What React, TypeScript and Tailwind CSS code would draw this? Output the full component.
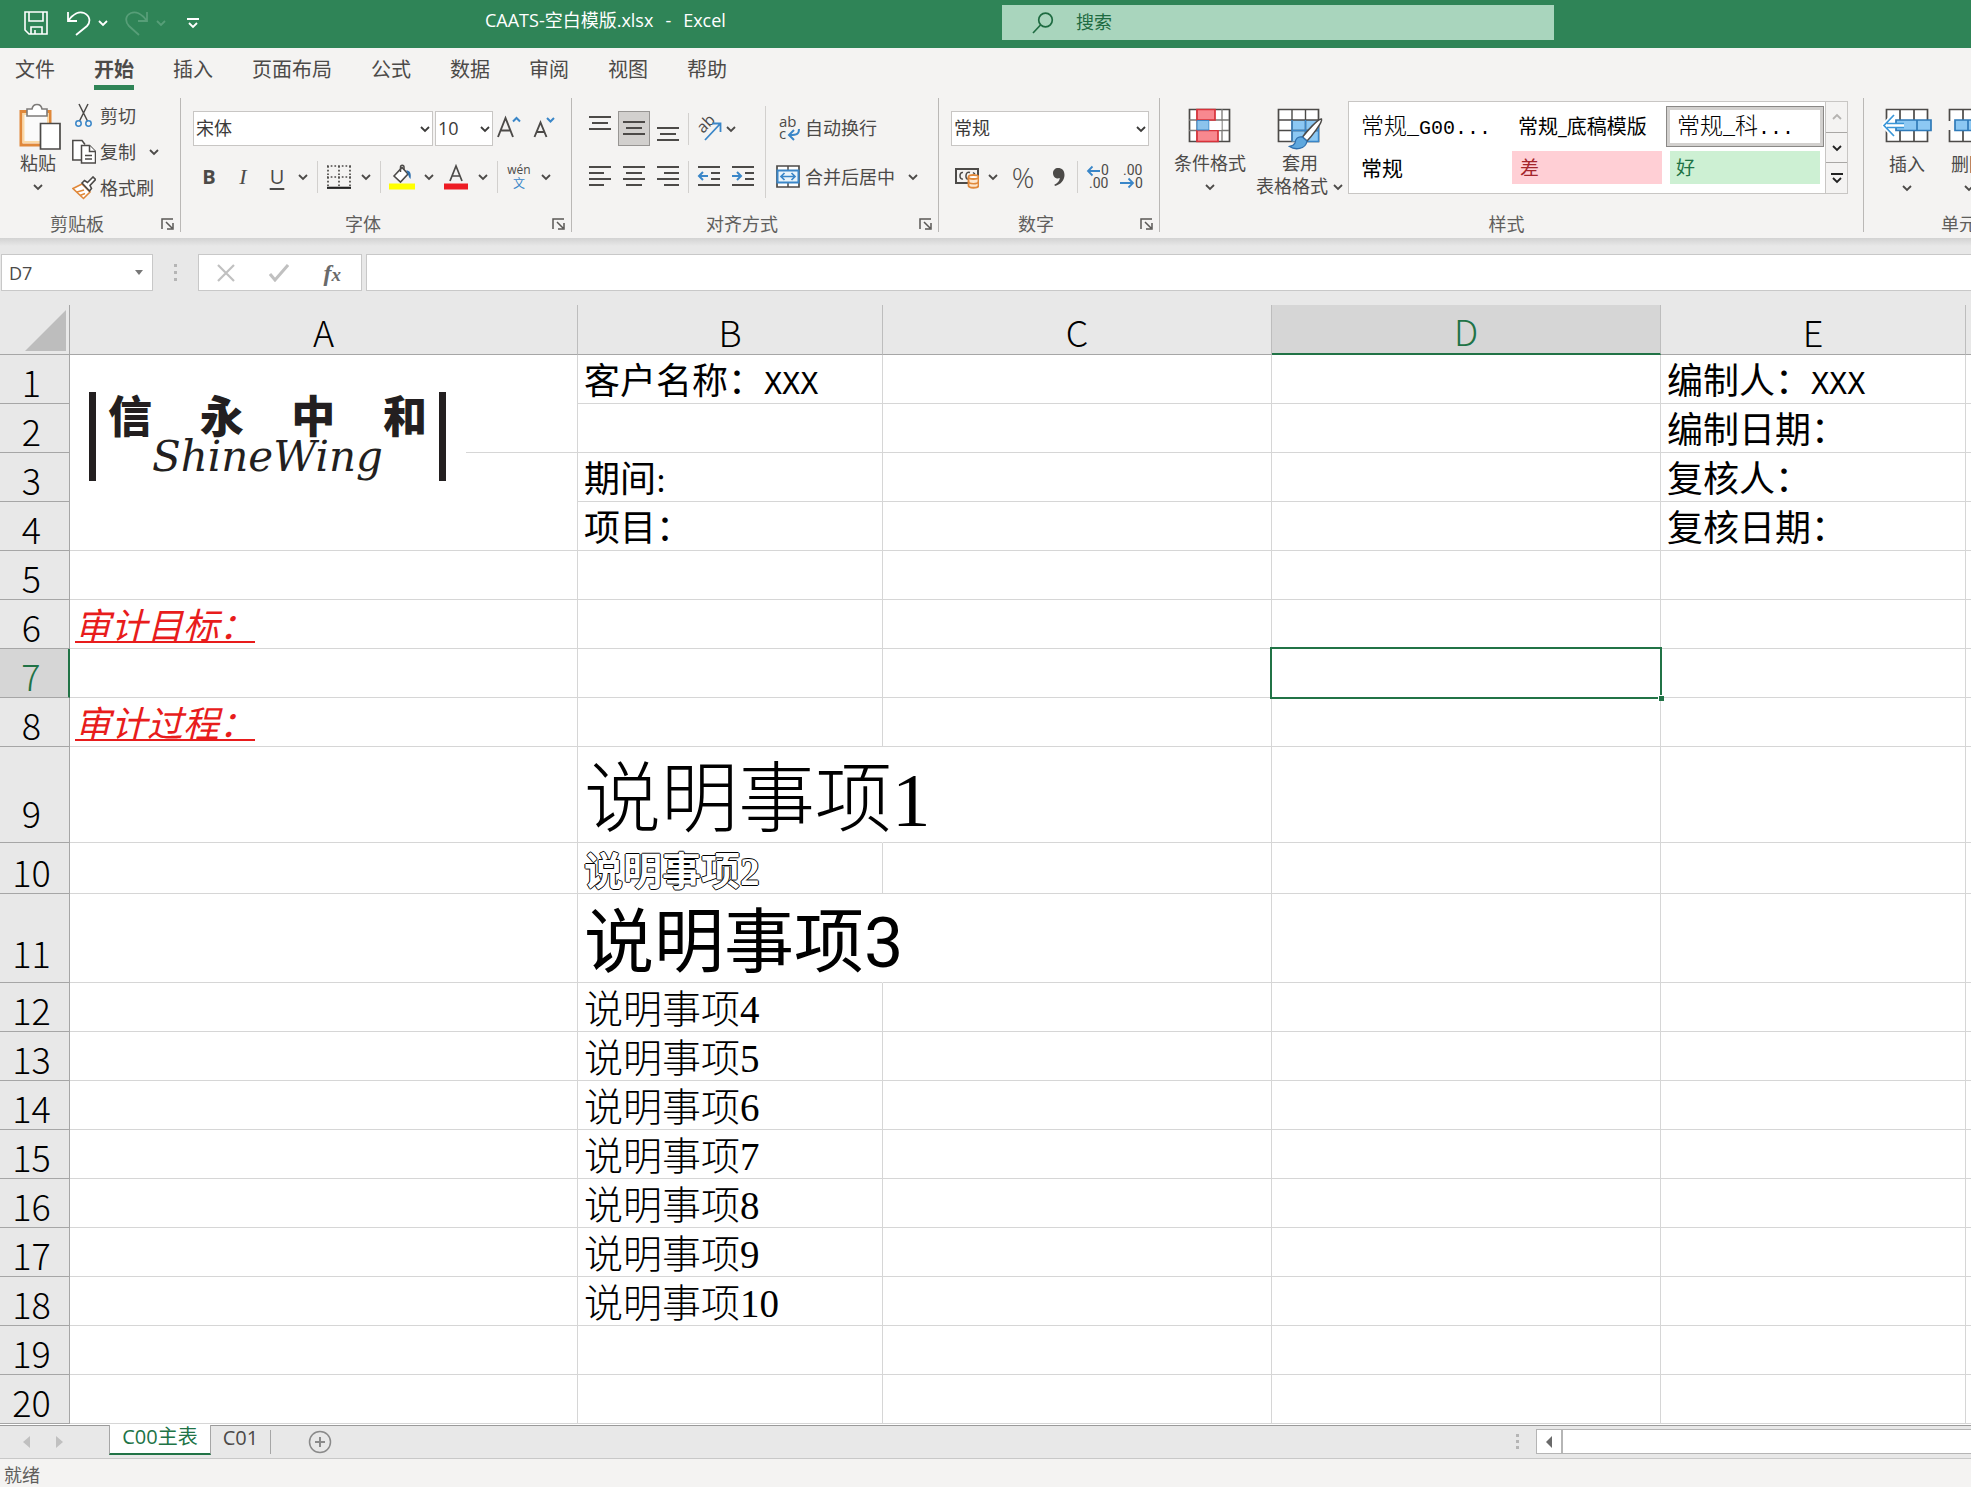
import React from "react";

const UI = "font-['Open_Sans','Noto_Sans_CJK_SC',sans-serif]";
const SONG = "font-['Liberation_Serif','Noto_Sans_CJK_SC',serif]";

function Chevron({ className = "" }: { className?: string }) {
  return (
    <svg className={`h-3 w-3 shrink-0 ${className}`} viewBox="0 0 12 12" fill="none" stroke="currentColor" strokeWidth="1.8">
      <path d="M2 4l4 4 4-4" />
    </svg>
  );
}

function Sep({ className = "" }: { className?: string }) {
  return <div className={`w-px shrink-0 bg-[#d2d0ce] ${className}`} />;
}

function IconButton({ label, className = "", children }: { label: string; className?: string; children: React.ReactNode }) {
  return (
    <button type="button" aria-label={label} className={`flex shrink-0 items-center justify-center ${className}`}>
      {children}
    </button>
  );
}

function Group({ label, launcher = true, className = "", children }: { label: string; launcher?: boolean; className?: string; children: React.ReactNode }) {
  return (
    <section className={`flex h-[134px] shrink-0 flex-col border-r border-[#bab8b6] ${className}`} aria-label={label}>
      <div className="h-[118px]">{children}</div>
      <div className="flex h-4 items-center pr-1">
        <span className="flex-1 pr-1.5 text-center text-[18px] leading-4 text-[#605e5c]">{label}</span>
        {launcher && (
          <IconButton label={`${label}设置`} className="h-4 w-4">
            <svg width="14" height="14" viewBox="0 0 14 14" fill="none" stroke="#5a5856" strokeWidth="1.5">
              <path d="M1 12V2h11M5 5l6 6M12 6v6H6" />
            </svg>
          </IconButton>
        )}
      </div>
    </section>
  );
}

function SelectBox({ label, value, className = "" }: { label: string; value: string; className?: string }) {
  return (
    <label className={`relative block h-[35px] shrink-0 ${className}`}>
      <select aria-label={label} defaultValue={value} className="h-full w-full appearance-none border border-[#c8c6c4] bg-white pl-0.5 text-[18px] text-[#3b3a39] outline-none">
        <option>{value}</option>
      </select>
      <Chevron className="pointer-events-none absolute right-0.5 top-3 text-[#3b3a39]" />
    </label>
  );
}

function Lines({ rows, top }: { rows: [number, number][]; top: number }) {
  return (
    <svg width="24" height="28" viewBox="0 0 24 28" stroke="#4c4a48" strokeWidth="2">
      {rows.map(([a, b], i) => (
        <path key={i} d={`M${a} ${top + i * 6}H${b}`} />
      ))}
    </svg>
  );
}

function Clipboard() {
  return (
    <Group label="剪贴板" className="w-[181px]">
      <div className="flex pl-3">
        <button type="button" className="flex w-[52px] flex-col items-center pt-[3px] text-[18px] leading-6 text-[#4c4a48]">
          <svg width="46" height="50" viewBox="0 0 46 50" fill="none">
            <path d="M6 10.500H35V44H6z" fill="#fff" stroke="#e0883a" strokeWidth="3" />
            <path d="M8.500 13H33v28H8.500z" fill="#fafafa" stroke="#fbd9a6" strokeWidth="2" />
            <path d="M12 8h5c1-6 9-6 10 0h5v7H12z" fill="#fff" stroke="#7d7b79" strokeWidth="1.600" />
            <path d="M25.500 22.500H45V48H25.500z" fill="#fff" stroke="#4c4a48" strokeWidth="1.700" />
          </svg>
          <span>粘贴</span>
          <Chevron className="mt-1.5" />
        </button>
        <div className="flex flex-col pl-2 text-[18px] text-[#4c4a48]">
          <button type="button" className="flex h-9 items-center gap-1">
            <svg width="24" height="26" viewBox="0 0 24 26" fill="none" strokeWidth="1.500">
              <path d="M7 1l8.500 17M16 1L7.500 18" stroke="#4c4a48" />
              <circle cx="6.500" cy="20.500" r="2.700" stroke="#3a86c8" />
              <circle cx="16.500" cy="20.500" r="2.700" stroke="#3a86c8" />
            </svg>
            剪切
          </button>
          <button type="button" className="flex h-9 items-center gap-1">
            <svg width="24" height="26" viewBox="0 0 24 26" fill="#fff" stroke="#4c4a48" strokeWidth="1.500">
              <path d="M9 21H.8V1.500H10l3 4" />
              <path d="M9.500 6.500h8l6 6V24h-14z" />
              <path d="M17.500 6.500v6h6M13 16.500h7M13 20h7" />
            </svg>
            复制
            <Chevron className="ml-2" />
          </button>
          <button type="button" className="flex h-9 items-center gap-1">
            <svg width="24" height="24" viewBox="0 0 24 24" fill="none" strokeWidth="1.600">
              <path d="M1 12.500l9-4.500 8 8-6.500 6.500z" fill="#fff" stroke="#e0883a" />
              <path d="M5 16l7-2M8 19.500l5-2" stroke="#e0883a" />
              <path d="M10 7l2.500-2.500 3 2L21 1l2.500 2.500-5.500 6 1.500 3-2 2.500z" fill="#fff" stroke="#4c4a48" />
            </svg>
            格式刷
          </button>
        </div>
      </div>
    </Group>
  );
}

function FontGroup() {
  return (
    <Group label="字体" className="w-[391px]">
      <div className="flex flex-col gap-[15px] pl-3 pt-[13px] text-[#4c4a48]">
        <div className="flex items-center">
          <SelectBox label="字体" value="宋体" className="w-[240px]" />
          <SelectBox label="字号" value="10" className="ml-0.5 w-[58px]" />
          <IconButton label="增大字号" className="ml-1 w-6">
            <svg width="24" height="30" viewBox="0 0 24 30" fill="none">
              <path d="M1 23L8.500 4l7.500 19M4 16.500h9" stroke="#4c4a48" strokeWidth="1.900" />
              <path d="M16 7.500l3.500-3.500L23 7.500" stroke="#3a86c8" strokeWidth="2" />
            </svg>
          </IconButton>
          <IconButton label="减小字号" className="ml-3 w-6">
            <svg width="24" height="30" viewBox="0 0 24 30" fill="none">
              <path d="M1.500 23L7.500 8.500l6 14.500M4 18h7" stroke="#4c4a48" strokeWidth="1.900" />
              <path d="M14 4l3.500 3.500L21 4" stroke="#3a86c8" strokeWidth="2" />
            </svg>
          </IconButton>
        </div>
        <div className="flex h-8 items-center pl-0.5">
          <div className="flex items-center gap-1.5 pr-2">
            <IconButton label="加粗" className="w-7 text-[20px] font-bold leading-7">B</IconButton>
            <IconButton label="倾斜" className="w-7 font-['Liberation_Serif',serif] text-[22px] italic leading-7">I</IconButton>
            <IconButton label="下划线" className="w-7 text-[20px] leading-7 underline underline-offset-4">U</IconButton>
            <Chevron />
          </div>
          <Sep className="h-8" />
          <div className="flex items-center gap-2 px-2">
            <IconButton label="边框" className="w-[26px]">
              <svg width="24" height="24" viewBox="0 0 24 24" fill="none" stroke="#4c4a48" strokeWidth="1.700">
                <path d="M0 1h24M0 12h24" strokeDasharray="1.700 2" />
                <path d="M1 1v20M12 1v20M23 1v20" strokeDasharray="1.700 2" />
                <path d="M0 22.800h24" stroke="#222" strokeWidth="2.200" />
              </svg>
            </IconButton>
            <Chevron />
          </div>
          <Sep className="h-8" />
          <div className="flex items-center gap-2 px-2">
            <IconButton label="填充颜色" className="w-[26px]">
              <svg width="26" height="26" viewBox="0 0 26 26" fill="none">
                <path d="M5 12L13 3.500l6 6.500-7.500 8z" fill="#fff" stroke="#4c4a48" strokeWidth="1.600" />
                <path d="M11.500 8V3c0-2.500 3.500-2.500 3.500 0v3" stroke="#4c4a48" strokeWidth="1.500" />
                <path d="M17 6.500c4 0 5.500 2.500 4.500 8.500-2-1.500-2-5-4.500-8.500z" fill="#2f6fad" />
                <path d="M0 19.500h26v6H0z" fill="#ffff00" />
              </svg>
            </IconButton>
            <Chevron />
            <IconButton label="字体颜色" className="w-[26px]">
              <svg width="26" height="26" viewBox="0 0 26 26" fill="none">
                <path d="M7 17L13 2l6 15M9 12h8" stroke="#4c4a48" strokeWidth="1.700" />
                <path d="M1 19.500h24v6H1z" fill="#ed1c24" />
              </svg>
            </IconButton>
            <Chevron />
          </div>
          <Sep className="h-8" />
          <div className="flex items-center gap-2 pl-2">
            <IconButton label="拼音" className="h-8 w-[26px] flex-col">
              <span className="text-[12px] leading-[14px]">wén</span>
              <span className="text-[12px] leading-[14px] text-[#3a86c8]">文</span>
            </IconButton>
            <Chevron />
          </div>
        </div>
      </div>
    </Group>
  );
}

function AlignGroup() {
  const full: [number, number] = [1, 23];
  return (
    <Group label="对齐方式" className="w-[367px]">
      <div className="flex pl-3 text-[#4c4a48]">
        <div className="flex w-[181px] flex-col gap-[15px] pt-[13px]">
          <div className="flex h-[35px] items-center gap-0.5">
            <IconButton label="顶端对齐" className="h-[35px] w-8"><Lines rows={[full, [4, 20], full]} top={2} /></IconButton>
            <IconButton label="垂直居中" className="h-[35px] w-8 border border-[#979593] bg-[#d2d0ce]"><Lines rows={[full, [4, 20], full]} top={7} /></IconButton>
            <IconButton label="底端对齐" className="h-[35px] w-8"><Lines rows={[full, [4, 20], full]} top={13} /></IconButton>
            <Sep className="ml-0.5 h-8" />
            <IconButton label="方向" className="ml-1.5 w-[26px]">
              <svg width="26" height="28" viewBox="0 0 26 28" className="overflow-visible" fill="none">
                <text transform="translate(6 19) rotate(-45)" fontSize="16" fontFamily="Open Sans" fill="#4c4a48">ab</text>
                <path d="M8 25L23 9M15 8.500h8.500v8.500" stroke="#3a86c8" strokeWidth="1.800" />
              </svg>
            </IconButton>
            <Chevron />
          </div>
          <div className="flex h-8 items-center gap-0.5">
            <IconButton label="左对齐" className="w-8"><Lines rows={[full, [1, 16], full, [1, 16]]} top={4} /></IconButton>
            <IconButton label="居中" className="w-8"><Lines rows={[full, [4, 20], full, [4, 20]]} top={4} /></IconButton>
            <IconButton label="右对齐" className="w-8"><Lines rows={[full, [8, 23], full, [8, 23]]} top={4} /></IconButton>
            <Sep className="ml-0.5 h-8" />
            <IconButton label="减少缩进" className="ml-1.5 w-6">
              <svg width="24" height="28" viewBox="0 0 24 28" fill="none" stroke="#4c4a48" strokeWidth="2">
                <path d="M1 4h22M14 10h9M14 16h9M1 22h22" />
                <path d="M11 13H2M6 9l-4 4 4 4" stroke="#3a86c8" />
              </svg>
            </IconButton>
            <IconButton label="增加缩进" className="ml-2 w-6">
              <svg width="24" height="28" viewBox="0 0 24 28" fill="none" stroke="#4c4a48" strokeWidth="2">
                <path d="M1 4h22M14 10h9M14 16h9M1 22h22" />
                <path d="M1 13h9M6 9l4 4-4 4" stroke="#3a86c8" />
              </svg>
            </IconButton>
          </div>
        </div>
        <Sep className="mt-2 h-[92px]" />
        <div className="flex flex-col gap-[15px] pl-2.5 pt-[13px] text-[18px]">
          <button type="button" className="flex h-[35px] items-center gap-1">
            <svg width="25" height="28" viewBox="0 0 25 28" className="overflow-visible" fill="none">
              <text x="3" y="12" fontSize="15" fontFamily="Open Sans" fill="#4c4a48">ab</text>
              <text x="3" y="24" fontSize="15" fontFamily="Open Sans" fill="#4c4a48">c</text>
              <path d="M23 14c0 5-2 6-9 6M18 15l-5 5 5 5" stroke="#3a86c8" strokeWidth="2" />
            </svg>
            自动换行
          </button>
          <button type="button" className="flex h-8 items-center gap-1">
            <svg width="25" height="24" viewBox="0 0 25 24" fill="none">
              <path d="M1 1h22v21H1z" fill="#fff" stroke="#4c4a48" strokeWidth="1.700" />
              <path d="M12 1v5M12 18v4" stroke="#4c4a48" strokeWidth="1.500" />
              <path d="M1.500 5.500h21v12h-21z" fill="#eaf4fb" stroke="#3a86c8" strokeWidth="2" />
              <path d="M5 11.500h14M8.500 8l-3.500 3.500L8.500 15M15.500 8l3.500 3.500-3.500 3.500" stroke="#3a86c8" strokeWidth="1.700" />
            </svg>
            合并后居中
            <Chevron className="ml-2" />
          </button>
        </div>
      </div>
    </Group>
  );
}

function NumberGroup() {
  return (
    <Group label="数字" className="w-[221px]">
      <div className="flex flex-col gap-[15px] pl-3 pr-2.5 pt-[13px] text-[#4c4a48]">
        <SelectBox label="数字格式" value="常规" />
        <div className="flex h-8 items-center pl-1">
          <IconButton label="会计数字格式" className="w-6">
            <svg width="24" height="24" viewBox="0 0 24 24" fill="none">
              <path d="M1 4h22v14H1z" stroke="#4c4a48" strokeWidth="2" />
              <path d="M8 7.500c-4-1-4 7.500 0 6.500M15 7.500c-5-2-5 7.500-2 6.500M20 9l-2-1.500" stroke="#4c4a48" strokeWidth="1.500" />
              <path d="M13.500 12v8.500c0 3 10 3 10 0V12" fill="#fde7cf" stroke="#e0883a" strokeWidth="1.800" />
              <ellipse cx="18.500" cy="12" rx="5" ry="2" fill="#fff" stroke="#e0883a" strokeWidth="1.800" />
              <path d="M13.500 16.500c0 3 10 3 10 0" stroke="#e0883a" strokeWidth="1.600" />
            </svg>
          </IconButton>
          <Chevron className="ml-2" />
          <IconButton label="百分比样式" className="ml-2.5 w-7 text-[28px] font-light leading-8">%</IconButton>
          <IconButton label="千位分隔样式" className="ml-3 w-5">
            <svg width="14" height="20" viewBox="0 0 14 20">
              <path d="M6 1c4 0 6.500 2.500 6.500 7C12.500 13 9 17.500 3 19l-.7-1.300C5.500 16.500 7.500 14 7.800 11 4.500 12.500 1 10 1 6.200 1 3 3.200 1 6 1z" fill="#4c4a48" />
            </svg>
          </IconButton>
          <Sep className="ml-2 h-8" />
          <IconButton label="增加小数位数" className="ml-2 w-6">
            <svg width="24" height="28" viewBox="0 0 24 28" className="overflow-visible" fill="none" fontFamily="Roboto" fontSize="14">
              <text x="15" y="12" fill="#4c4a48">0</text>
              <text x="3" y="25" fill="#4c4a48">.00</text>
              <path d="M14 8H2M6.500 3.500L2 8l4.500 4.500" stroke="#3a86c8" strokeWidth="1.800" />
            </svg>
          </IconButton>
          <IconButton label="减少小数位数" className="ml-2.5 w-6">
            <svg width="24" height="28" viewBox="0 0 24 28" className="overflow-visible" fill="none" fontFamily="Roboto" fontSize="14">
              <text x="3" y="12" fill="#4c4a48">.00</text>
              <text x="15" y="25" fill="#4c4a48">0</text>
              <path d="M0 20h13M8.500 15.500L13 20l-4.500 4.500" stroke="#3a86c8" strokeWidth="1.800" />
            </svg>
          </IconButton>
        </div>
      </div>
    </Group>
  );
}

function HalfWidth({ children }: { children: React.ReactNode }) {
  return <span className="font-['Liberation_Mono',monospace] text-[20px]">{children}</span>;
}

function StylesGroup() {
  return (
    <Group label="样式" launcher={false} className="w-[704px]">
      <div className="flex">
        <div className="flex w-[188px] shrink-0 pl-1 pt-1.5 text-[18px] leading-[23px] text-[#4c4a48]">
          <button type="button" className="flex w-[92px] flex-col items-center">
            <svg width="44" height="48" viewBox="0 0 44 48" fill="none">
              <path d="M1.500 5.500h40v32h-40z" fill="#fff" stroke="#4c4a48" strokeWidth="1.700" />
              <path d="M1 16h40M1 26.500h40M9 5v32M34 5v32" stroke="#7a7876" strokeWidth="1.300" />
              <path d="M9 5.500h18V16H9zM9 26.500h21v11H9z" fill="#f8888f" stroke="#d8323a" strokeWidth="1.700" />
              <path d="M9 16.500h12v9.500H9z" fill="#8cc3ec" stroke="#3a86c8" />
              <path d="M21.500 17h12v9h-12z" fill="#fff" />
            </svg>
            <span>条件格式</span>
            <Chevron className="mt-1.5" />
          </button>
          <button type="button" className="flex w-[88px] flex-col items-center">
            <svg width="48" height="48" viewBox="0 0 48 48" fill="none">
              <path d="M2.500 5.500h40v32h-40z" fill="#fff" stroke="#4c4a48" strokeWidth="1.700" />
              <path d="M16 16h26.500v21.500H16z" fill="#8cc8f3" />
              <path d="M2 16h40M2 26.500h40M16 5v32M29.500 5v32" stroke="#4c4a48" strokeWidth="1.400" />
              <path d="M16 37.500V16M29.500 16v21M42.500 16v21.500H30M16 26.500h26" stroke="#3a86c8" strokeWidth="1.400" />
              <path d="M45.500 15c-3-1-16 14-19 18l4.500 4c4-4 16-19 14.500-22z" fill="#fff" stroke="#4c4a48" strokeWidth="1.500" />
              <path d="M26.500 33c-5-1-7 2-7.500 6-1 2-3 3-5.500 3.500 5 3.500 16 3.500 17.500-5.500z" fill="#5fa8de" stroke="#2f6fad" strokeWidth="1.300" />
            </svg>
            <span>套用</span>
            <span className="flex items-center gap-1 whitespace-nowrap">表格格式<Chevron /></span>
          </button>
        </div>
        <div className="mt-[3px] flex h-[93px] border border-[#c8c6c4] bg-white text-black">
          <div className="grid grid-cols-[163px_154px_158px] grid-rows-[41px_33px] gap-y-1 py-1 pr-px">
            <button type="button" className="whitespace-nowrap pl-3 text-left font-['Noto_Sans_CJK_SC',sans-serif] text-[23px] font-light leading-8">常规<HalfWidth>_G00...</HalfWidth></button>
            <button type="button" className="whitespace-nowrap pl-1.5 text-left text-[20px] leading-9">常规_底稿模版</button>
            <button type="button" className="whitespace-nowrap border border-[#8a8886] bg-white pl-2.5 text-left font-['Noto_Sans_CJK_SC',sans-serif] text-[23px] font-light leading-8 shadow-[inset_0_0_0_3px_#d2d0ce]">常规<HalfWidth>_</HalfWidth>科<HalfWidth>...</HalfWidth></button>
            <button type="button" className="pl-3 text-left text-[21px] leading-8">常规</button>
            <button type="button" className="mr-1 bg-[#ffcfd5] pl-2 text-left text-[19px] leading-8 text-[#a4262c]">差</button>
            <button type="button" className="mx-1 bg-[#cdf0d3] pl-1.5 text-left text-[19px] leading-8 text-[#217346]">好</button>
          </div>
          <div className="flex w-[22px] flex-col divide-y divide-[#a9a7a5] border-l border-[#c8c6c4] bg-[#f4f3f2] text-[#222]">
            <IconButton label="向上" className="flex-1"><Chevron className="rotate-180 text-[#b5b3b1]" /></IconButton>
            <IconButton label="向下" className="flex-1"><Chevron /></IconButton>
            <IconButton label="其他样式" className="flex-1">
              <svg width="12" height="12" viewBox="0 0 12 12" fill="none" stroke="currentColor" strokeWidth="1.800"><path d="M0 2h12M2 6l4 4 4-4" /></svg>
            </IconButton>
          </div>
        </div>
      </div>
    </Group>
  );
}

function CellsGroup() {
  return (
    <section className="flex h-[134px] min-w-0 flex-1 flex-col overflow-hidden" aria-label="单元格">
      <div className="flex h-[118px] pl-3 pt-1.5 text-[18px] leading-6 text-[#4c4a48]">
        <button type="button" className="flex w-[62px] shrink-0 flex-col items-center">
          <svg width="50" height="48" viewBox="0 0 50 48" fill="none">
            <path d="M4.500 5.500h41v32h-41zM18 5v32M32 5v32" fill="#fff" stroke="#4c4a48" strokeWidth="1.700" />
            <path d="M14 16h35v10.500H14z" fill="#8cc8f3" stroke="#2f7ab8" strokeWidth="1.700" />
            <path d="M35 16v10" stroke="#2f7ab8" strokeWidth="1.700" />
            <path d="M22 21.500H3M12 11L2 21.500 12 32" stroke="#fff" strokeWidth="5" />
            <path d="M22 19.500H5M22 23.500H5M12 11L2 21.500 12 32" stroke="#3a96d8" strokeWidth="1.700" />
          </svg>
          <span>插入</span>
          <Chevron className="mt-1.5" />
        </button>
        <button type="button" className="flex w-[62px] shrink-0 flex-col items-center">
          <svg width="46" height="48" viewBox="0 0 46 48" fill="none">
            <path d="M3.500 5.500h41v32h-41zM17 5v32M31 5v32" fill="#fff" stroke="#4c4a48" strokeWidth="1.700" />
            <path d="M0 17h12v9H0z" fill="#f4f3f2" />
            <path d="M9 16h35v10.500H9zM22 16v10" fill="#8cc8f3" stroke="#2f7ab8" strokeWidth="1.700" />
          </svg>
          <span>删除</span>
          <Chevron className="mt-1.5" />
        </button>
      </div>
      <div className="h-4 whitespace-nowrap pl-[77px] text-[18px] leading-4 text-[#605e5c]">单元格</div>
    </section>
  );
}

function TitleBar() {
  return (
    <header className="flex h-12 items-center bg-[#2f8457] text-white">
      <div className="flex w-[485px] shrink-0 items-center pb-0.5 pl-6">
        <IconButton label="保存">
          <svg width="24" height="24" viewBox="0 0 24 24" fill="none" stroke="#fff" strokeWidth="1.600">
            <path d="M1 1h22v22H5l-4-4zM5 1v9h14V1M7 23v-7h11v7M11 23v-4" />
          </svg>
        </IconButton>
        <IconButton label="撤消" className="ml-[19px]">
          <svg width="24" height="26" viewBox="0 0 24 26" fill="none" stroke="#fff" strokeWidth="1.800">
            <path d="M1 2v9h9M1.500 10.500C6 4 12 1 17 3c6 2.500 7 9 3 13l-11 9" />
          </svg>
        </IconButton>
        <Chevron className="ml-1.5" />
        <IconButton label="恢复" className="ml-4">
          <svg width="24" height="26" viewBox="0 0 24 26" fill="none" stroke="#579e78" strokeWidth="1.800">
            <path d="M22 2v9h-9M21.500 10.500C17 4 11 1 6 3c-6 2.500-6 9-2 13l10 9" />
          </svg>
        </IconButton>
        <Chevron className="ml-1.5 text-[#579e78]" />
        <IconButton label="自定义快速访问工具栏" className="ml-5">
          <svg width="12" height="12" viewBox="0 0 12 12" fill="none" stroke="#fff" strokeWidth="1.800"><path d="M0 2h12M2 6l4 4 4-4" /></svg>
        </IconButton>
      </div>
      <h1 className="flex w-[517px] shrink-0 gap-3 pb-2 text-[18px]">
        <span>CAATS-空白模版.xlsx</span>
        <span>-</span>
        <span>Excel</span>
      </h1>
      <label className="mb-[3px] flex h-[35px] w-[552px] items-center gap-[22px] bg-[#a9d5bd] pl-[30px]">
        <svg width="22" height="22" viewBox="0 0 22 22" fill="none" stroke="#1e6b41" strokeWidth="1.700">
          <circle cx="13.500" cy="8" r="6.800" /><path d="M8.500 13L1 21" />
        </svg>
        <input aria-label="搜索" placeholder="搜索" className="min-w-0 flex-1 bg-transparent text-[18px] outline-none placeholder:text-[#1e6b41]" />
      </label>
    </header>
  );
}

const tabs = ["文件", "开始", "插入", "页面布局", "公式", "数据", "审阅", "视图", "帮助"];

function FormulaBar() {
  return (
    <div className="flex h-[67px] items-start bg-[linear-gradient(#d2d2d2,#e8e8e8_8px)] pt-4">
      <div className="relative ml-px h-[37px] w-[152px] shrink-0">
        <input aria-label="名称框" defaultValue="D7" className="h-full w-full border border-[#c8c8c8] bg-white pl-[7px] text-[18px] text-[#4c4a48]" />
        <svg className="absolute right-2.5 top-4" width="8" height="5" viewBox="0 0 8 5"><path d="M0 0h8L4 5z" fill="#777" /></svg>
      </div>
      <svg className="mx-[21px] mt-2.5 shrink-0" width="3" height="17" fill="#b5b5b5"><path d="M0 0h3v3H0zM0 7h3v3H0zM0 14h3v3H0z" /></svg>
      <div className="flex h-[37px] w-[164px] shrink-0 items-center justify-between border border-[#c8c8c8] bg-white pl-[18px] pr-4">
        <IconButton label="取消">
          <svg width="18" height="18" viewBox="0 0 18 18" stroke="#c0c0c0" strokeWidth="2.200"><path d="M1 1l16 16M17 1L1 17" /></svg>
        </IconButton>
        <IconButton label="输入">
          <svg width="20" height="18" viewBox="0 0 20 18" fill="none" stroke="#c0c0c0" strokeWidth="3"><path d="M1 10l5 6L19 1" /></svg>
        </IconButton>
        <IconButton label="插入函数" className="pr-1 font-['Liberation_Serif',serif] text-[24px] font-bold italic leading-7 text-[#6a6a6a]">
          f<span className="pt-1 text-[19px]">x</span>
        </IconButton>
      </div>
      <input aria-label="编辑栏" className="ml-1 h-[37px] min-w-0 flex-1 border border-r-0 border-[#c8c8c8] bg-white px-2" />
    </div>
  );
}

type Row = { h: string; head?: string; a?: string; b?: React.ReactNode; e?: React.ReactNode; spill?: boolean };

const H49 = "h-[49px]";
const label = `block pt-1.5 text-[36px] ${SONG}`;
const item = `block pt-1 text-[39px] font-light ${SONG}`;
const X = <span className="font-['DejaVu_Sans_Mono',monospace] text-[30px] leading-none">XXX</span>;

const rows: Row[] = [
  { h: H49, b: <span className={label}>客户名称：{X}</span>, e: <span className={label}>编制人：{X}</span> },
  { h: H49, e: <span className={label}>编制日期：</span> },
  { h: H49, b: <span className={label}>期间:</span>, e: <span className={label}>复核人：</span> },
  { h: H49, b: <span className={label}>项目：</span>, e: <span className={label}>复核日期：</span> },
  { h: H49 },
  { h: H49, a: "审计目标：" },
  { h: H49 },
  { h: H49, a: "审计过程：" },
  { h: "h-[96px]", head: "pb-3", spill: true, b: <span className={`block pt-3 text-[77px] font-light ${SONG}`}>说明事项1</span> },
  {
    h: "h-[51px]",
    b: (
      <span className={`block pt-1.5 text-[39px] font-bold text-white [-webkit-text-stroke:4px_white] [paint-order:stroke] [text-shadow:1px_0_#000,-1px_0_#000,0_1px_#000,0_-1px_#000] ${SONG}`}>
        说明事项2
      </span>
    ),
  },
  { h: "h-[89px]", head: "pb-3", spill: true, b: <span className="block pt-2.5 font-['Roboto','Noto_Sans_CJK_SC',sans-serif] text-[70px]">说明事项3</span> },
  ...[4, 5, 6, 7, 8, 9, 10].map((n) => ({ h: H49, b: <span className={item}>说明事项{n}</span> })),
  { h: H49 },
  { h: H49 },
];

const cell = "relative border-b border-r border-[#d6d6d6] p-0 pl-1.5 align-middle leading-none whitespace-nowrap";
const HEADFONT = "font-['Noto_Sans_CJK_SC',sans-serif] font-light text-[36px] leading-none";

function Logo() {
  return (
    <div className="absolute left-0 top-[26px] z-10 flex h-[96px] w-[396px] items-start bg-white pl-[19px] pt-[11px] text-[#231f20]" role="img" aria-label="信永中和 ShineWing">
      <div className="h-[89px] w-[7px] shrink-0 bg-[#231f20]" />
      <div className="flex h-[89px] w-[343px] shrink-0 flex-col px-3">
        <div className="flex justify-between font-['Noto_Sans_CJK_SC',sans-serif] text-[44px] font-black leading-[44px]">
          <span>信</span><span>永</span><span>中</span><span>和</span>
        </div>
        <div className="text-center font-['DejaVu_Serif',serif] text-[42px] italic leading-[42px]">ShineWing</div>
      </div>
      <div className="h-[89px] w-[7px] shrink-0 bg-[#231f20]" />
    </div>
  );
}

function Sheet() {
  return (
    <table className="w-full table-fixed border-separate border-spacing-0 bg-white text-black">
      <colgroup>
        <col className="w-[70px]" />
        <col className="w-[508px]" />
        <col className="w-[305px]" />
        <col className="w-[389px]" />
        <col className="w-[389px]" />
        <col className="w-[305px]" />
        <col />
      </colgroup>
      <thead>
        <tr className="h-[50px] bg-[#e8e8e8]">
          <th className="border-b border-r border-[#a6a6a6] p-0 align-bottom" aria-label="全选">
            <svg className="mb-[3px] ml-auto mr-[3px]" width="41" height="41" viewBox="0 0 41 41"><path d="M41 0v41H0z" fill="#bdbdbd" /></svg>
          </th>
          {["A", "B", "C", "D", "E"].map((c) => (
            <th key={c} scope="col" className={`p-0 pt-0.5 ${HEADFONT} ${c === "D" ? "border-b-2 border-r border-b-[#217346] border-r-[#bdbdbd] bg-[#d6d6d6] text-[#217346]" : "border-b border-r border-b-[#a6a6a6] border-r-[#bdbdbd]"}`}>
              {c}
            </th>
          ))}
          <th className="border-b border-[#a6a6a6] p-0" />
        </tr>
      </thead>
      <tbody>
        {rows.map((r, i) => {
          const n = i + 1;
          const active = n === 7;
          return (
            <tr key={n} className={r.h}>
              <th scope="row" className={`border-b border-b-[#a6a6a6] p-0 pr-1.5 align-bottom ${HEADFONT} ${r.head ?? "pb-1"} ${active ? "border-r-2 border-r-[#217346] bg-[#d6d6d6] text-[#217346]" : "border-r border-r-[#a6a6a6] bg-[#e8e8e8]"}`}>
                {n}
              </th>
              {n !== 2 && n !== 4 && (
                <td rowSpan={n === 1 || n === 3 ? 2 : 1} className="relative border-b border-r border-[#d6d6d6] p-0 pl-[5px] leading-none">
                  {n === 1 && <Logo />}
                  {r.a && (
                    <span className={`block pt-1.5 text-[36px] italic leading-[42px] text-[#e81c1c] underline decoration-2 underline-offset-2 ${SONG}`}>{r.a}</span>
                  )}
                </td>
              )}
              <td className={`${cell} ${r.spill ? "z-10 border-r-transparent" : ""}`}>{r.b}</td>
              <td className={cell} />
              <td className={cell}>
                {active && (
                  <div className="absolute -inset-0.5 z-10 border-2 border-[#217346]">
                    <div className="absolute -bottom-1 -right-1 h-1.5 w-1.5 border-l border-t border-white bg-[#217346]" />
                  </div>
                )}
              </td>
              <td className={cell}>{r.e}</td>
              <td className="border-b border-[#d6d6d6] p-0" />
            </tr>
          );
        })}
      </tbody>
    </table>
  );
}

function SheetTabs() {
  return (
    <div className="flex h-[34px] items-start border-b border-t border-b-[#c8c8c8] border-t-[#9a9a9a] bg-[#e8e8e8]">
      <div className="flex h-8 w-[109px] shrink-0 items-center gap-6 pl-[23px]">
        <IconButton label="上一个工作表"><svg width="8" height="12" viewBox="0 0 8 12"><path d="M7 0v12L0 6z" fill="#c0c0c0" /></svg></IconButton>
        <IconButton label="下一个工作表"><svg width="8" height="12" viewBox="0 0 8 12"><path d="M1 0v12l7-6z" fill="#c0c0c0" /></svg></IconButton>
      </div>
      <button type="button" className="-mt-px h-[30px] w-[102px] shrink-0 border-x border-b-2 border-x-[#a6a6a6] border-b-[#217346] bg-white pb-1 text-[20px] leading-6 text-[#217346]">C00主表</button>
      <button type="button" className="h-7 w-[59px] shrink-0 pb-1 text-[20px] leading-6 text-[#4c4a48]">C01</button>
      <div className="mt-1 h-6 w-px shrink-0 bg-[#a6a6a6]" />
      <IconButton label="新工作表" className="ml-[37px] h-8">
        <svg width="24" height="24" viewBox="0 0 24 24" fill="none" stroke="#8a8a8a" strokeWidth="1.500">
          <circle cx="12" cy="12" r="10.500" /><path d="M12 7v10M7 12h10" strokeWidth="2" />
        </svg>
      </IconButton>
      <div className="flex-1" />
      <svg className="mr-[17px] mt-2 shrink-0" width="3" height="16" fill="#b5b5b5"><path d="M0 0h3v3H0zM0 6h3v3H0zM0 12h3v3H0z" /></svg>
      <div className="mt-[3px] flex h-[25px] w-[435px] shrink-0 border border-r-0 border-[#b5b5b5] bg-white">
        <IconButton label="向左滚动" className="w-[26px] border-r-2 border-[#b5b5b5]">
          <svg width="6" height="12" viewBox="0 0 6 12"><path d="M6 0v12L0 6z" fill="#6a6a6a" /></svg>
        </IconButton>
      </div>
    </div>
  );
}

export default function App() {
  return (
    <div className={`flex min-h-screen w-full flex-col overflow-hidden bg-[#f4f3f2] ${UI}`}>
      <TitleBar />
      <nav className="flex h-[50px] items-start gap-[39px] pl-[15px] text-[20px] text-[#4c4a48]">
        {tabs.map((t) => (
          <button key={t} type="button" className={`mt-1.5 h-9 shrink-0 whitespace-nowrap border-b-[5px] leading-[30px] ${t === "开始" ? "border-[#2f8457] font-bold" : "border-transparent"}`}>
            {t}
          </button>
        ))}
      </nav>
      <div className="flex h-[140px] overflow-hidden">
        <Clipboard />
        <FontGroup />
        <AlignGroup />
        <NumberGroup />
        <StylesGroup />
        <CellsGroup />
      </div>
      <FormulaBar />
      <Sheet />
      <div className="h-px bg-white" />
      <SheetTabs />
      <footer className="flex flex-1 items-center pl-1 pt-1 text-[18px] leading-6 text-[#605e5c]">就绪</footer>
    </div>
  );
}
